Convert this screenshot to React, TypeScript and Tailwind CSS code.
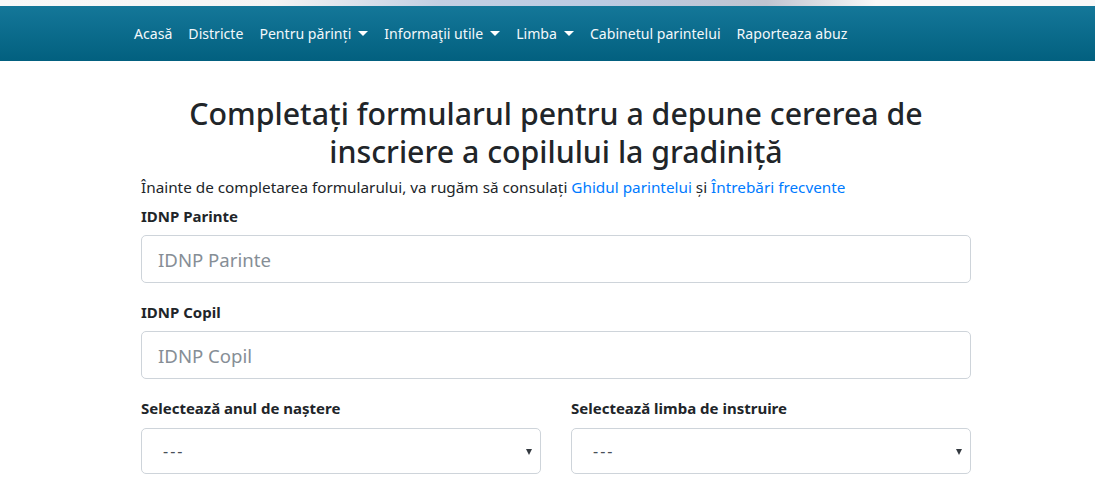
const navItems: { label: string; dropdown?: boolean }[] = [
  { label: 'Acasă' },
  { label: 'Districte' },
  { label: 'Pentru părinți', dropdown: true },
  { label: 'Informaţii utile', dropdown: true },
  { label: 'Limba', dropdown: true },
  { label: 'Cabinetul parintelui' },
  { label: 'Raporteaza abuz' },
]

function Caret() {
  return (
    <span className="ml-[7px] inline-block h-0 w-0 border-x-[5px] border-t-[5px] border-x-transparent border-t-white align-middle" />
  )
}

function SelectBox() {
  return (
    <div className="relative flex h-[46px] items-center rounded-[5px] border border-[#ced4da] bg-white pl-[21px] pr-[12px]">
      <span className="text-[16px] tracking-[2px] text-[#495057]">---</span>
      <span className="absolute right-[8px] top-[20px] h-0 w-0 border-x-[3.5px] border-t-[6px] border-x-transparent border-t-[#343a40]" />
    </div>
  )
}

export default function App() {
  return (
    <div className="min-h-screen bg-white font-['Noto_Sans',sans-serif] text-[#212529]">
      <div className="h-[6px] bg-[linear-gradient(90deg,#f8f8f8_0%,#f4f4f4_25%,#c3cfe2_40%,#bccbe2_55%,#c0c4d0_70%,#f8f8f8_80%,#f8f8f8_100%)]" />
      <nav className="flex h-[55px] items-center bg-[linear-gradient(180deg,#147799_0%,#02607f_100%)] pl-[126px]">
        {navItems.map((item) => (
          <a
            key={item.label}
            className="flex items-center px-[8px] text-[14.1px] text-[#f3f8fb]"
          >
            {item.label}
            {item.dropdown && <Caret />}
          </a>
        ))}
      </nav>

      <div className="ml-[141px] w-[830px] pt-[34px]">
        <h1 className="text-center text-[30.3px] font-medium leading-[38px] text-[#212529]">
          Completați formularul pentru a depune cererea de
          <br />
          inscriere a copilului la gradiniță
        </h1>
        <p className="mt-[5px] text-[15.3px] leading-[22px]">
          Înainte de completarea formularului, va rugăm să consulați{' '}
          <a className="text-[#007bff]">Ghidul parintelui</a> și{' '}
          <a className="text-[#007bff]">Întrebări frecvente</a>
        </p>

        <div className="mt-[7px]">
          <label className="block text-[15px] font-bold leading-[22px]">IDNP Parinte</label>
          <input
            placeholder="IDNP Parinte"
            className="mt-[8px] h-[48px] w-full rounded-[5px] border border-[#ced4da] px-[16px] text-[18.6px] placeholder:text-[#868e96] focus:outline-none"
          />
        </div>

        <div className="mt-[18px]">
          <label className="block text-[15px] font-bold leading-[22px]">IDNP Copil</label>
          <input
            placeholder="IDNP Copil"
            className="mt-[8px] h-[48px] w-full rounded-[5px] border border-[#ced4da] px-[16px] text-[18.6px] placeholder:text-[#868e96] focus:outline-none"
          />
        </div>

        <div className="mt-[18px] grid grid-cols-2 gap-[30px]">
          <div>
            <label className="block text-[15px] font-bold leading-[22px]">Selectează anul de naștere</label>
            <div className="mt-[9px]">
              <SelectBox />
            </div>
          </div>
          <div>
            <label className="block text-[15px] font-bold leading-[22px]">Selectează limba de instruire</label>
            <div className="mt-[9px]">
              <SelectBox />
            </div>
          </div>
        </div>

        <div className="mt-[18px]">
          <label className="block text-[15px] font-bold leading-[22px]">Selectează districtul</label>
        </div>
      </div>
    </div>
  )
}
